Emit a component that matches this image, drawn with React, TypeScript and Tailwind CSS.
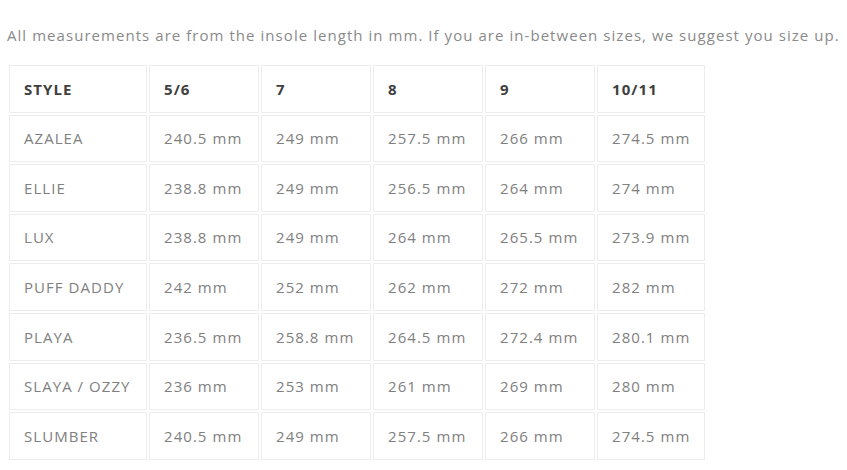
import React from 'react';

const sizes = ['5/6', '7', '8', '9', '10/11'];

const rows: [string, string[]][] = [
  ['AZALEA', ['240.5 mm', '249 mm', '257.5 mm', '266 mm', '274.5 mm']],
  ['ELLIE', ['238.8 mm', '249 mm', '256.5 mm', '264 mm', '274 mm']],
  ['LUX', ['238.8 mm', '249 mm', '264 mm', '265.5 mm', '273.9 mm']],
  ['PUFF DADDY', ['242 mm', '252 mm', '262 mm', '272 mm', '282 mm']],
  ['PLAYA', ['236.5 mm', '258.8 mm', '264.5 mm', '272.4 mm', '280.1 mm']],
  ['SLAYA / OZZY', ['236 mm', '253 mm', '261 mm', '269 mm', '280 mm']],
  ['SLUMBER', ['240.5 mm', '249 mm', '257.5 mm', '266 mm', '274.5 mm']],
];

const cell = 'border border-[#ececec] h-[47.6px] pl-[14px] pr-2 text-left align-middle';

export default function App() {
  return (
    <div className="w-[847px] h-[470px] bg-white px-[7px] pt-[24px] font-['Open_Sans',sans-serif]">
      <p className="text-[15px] leading-[22px] text-[#8a8a8a] tracking-[0.07em] whitespace-nowrap">
        All measurements are from the insole length in mm. If you are in-between sizes, we suggest you size up.
      </p>
      <table className="mt-[17px] border-separate border-spacing-[2px] text-[15px] tracking-[0.07em]">
        <thead>
          <tr>
            <th className={`${cell} w-[138px] font-bold text-[#3f3f3f]`}>STYLE</th>
            {sizes.map((s, i) => (
              <th key={s} className={`${cell} ${i === 4 ? 'w-[108px]' : 'w-[110px]'} font-bold text-[#3f3f3f]`}>
                {s}
              </th>
            ))}
          </tr>
        </thead>
        <tbody>
          {rows.map(([name, vals]) => (
            <tr key={name}>
              <td className={`${cell} text-[#808080]`}>{name}</td>
              {vals.map((v, i) => (
                <td key={i} className={`${cell} text-[#808080]`}>
                  {v}
                </td>
              ))}
            </tr>
          ))}
        </tbody>
      </table>
    </div>
  );
}
